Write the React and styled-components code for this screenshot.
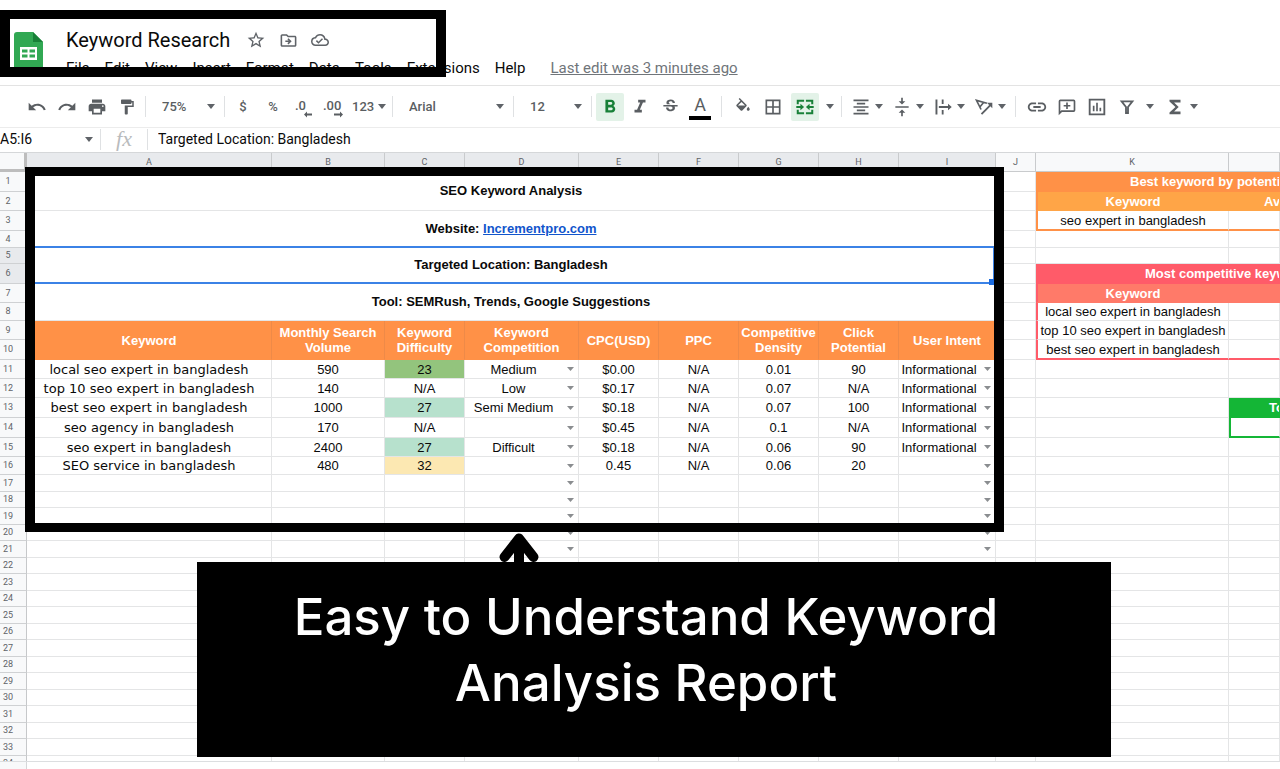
import React from "react";
import styled, { createGlobalStyle, css } from "styled-components";
import {
  MdUndo,
  MdRedo,
  MdPrint,
  MdFormatPaint,
  MdFormatBold,
  MdFormatItalic,
  MdStrikethroughS,
  MdBorderAll,
  MdFormatAlignCenter,
  MdVerticalAlignCenter,
  MdInsertLink,
  MdFunctions,
  MdStarBorder,
  MdOutlineDriveFileMove,
  MdOutlineCloudDone,
} from "react-icons/md";

const GlobalStyle = createGlobalStyle`
  *, *::before, *::after { box-sizing: border-box; }
  body { margin: 0; background: #fff; color: #0a0a0a; font-family: Roboto, "Liberation Sans", sans-serif; }
  button, input, select { font: inherit; color: inherit; border: 0; padding: 0; margin: 0; background: none; border-radius: 0; outline: none; }
  svg { display: block; flex: none; }
`;

const orange = "#ff9147";
const amber = "#ffa547";
const red = "#ff5b69";
const coral = "#ff7a69";
const green = "#14b636";
const line = "#e4e5e6";

const Page = styled.div`
  position: relative;
  display: flex;
  flex-direction: column;
  height: 100vh;
  overflow: hidden;
`;

/* Title area */

const Header = styled.header`
  display: flex;
  flex: none;
  gap: 23px;
  padding: 26px 14px 7px;
  border-bottom: 1px solid #e3e3e3;
`;

const LogoSlot = styled.div`
  padding-top: 6px;
  height: 46px;
`;

const HeaderText = styled.div`
  display: flex;
  flex-direction: column;
  gap: 4px;
`;

const TitleRow = styled.div`
  display: flex;
  align-items: center;
  height: 28px;
`;

const Title = styled.h1`
  margin: 0 10px 0 0;
  font-size: 20px;
  line-height: 28px;
  font-weight: 400;
  white-space: nowrap;
`;

const TitleButton = styled.button`
  display: flex;
  align-items: center;
  justify-content: center;
  width: 32px;
  height: 28px;
  color: #5f6368;
`;

const MenuBar = styled.nav`
  display: flex;
  align-items: center;
  gap: 15px;
  height: 20px;
  font-size: 15px;
  line-height: 20px;
  white-space: nowrap;
`;

const EditLink = styled.a`
  margin-left: 10px;
  color: #70757a;
  text-decoration: underline;
`;

/* Toolbar */

const Toolbar = styled.div`
  display: flex;
  flex: none;
  align-items: center;
  height: 42px;
  padding-left: 22px;
  border-bottom: 1px solid #ececec;
  color: #5a5e62;
  font-size: 13px;
  font-weight: 500;
`;

const Divider = styled.span`
  flex: none;
  width: 1px;
  height: 21px;
  margin: 0 ${(p) => (p.$wide ? 6 : 3)}px;
  background: #dfe1e3;
`;

const ToolButton = styled.button`
  display: flex;
  flex: none;
  align-items: center;
  justify-content: center;
  width: ${(p) => p.$width || 30}px;
  height: 28px;
  ${(p) =>
    p.$active &&
    css`
      width: 28px;
      margin: 0 ${p.$width ? 3 : 1}px;
      border-radius: 2px;
      background: #e3f2e8;
      color: #188038;
    `}
`;

const SplitButton = styled.button`
  display: flex;
  flex: none;
  align-items: center;
  gap: 4px;
  width: 41px;
  height: 28px;
  padding-left: 6px;
`;

const NumberFormat = styled(SplitButton)`
  padding-left: 4px;
`;

const PickerWrap = styled.label`
  display: grid;
  flex: none;
  align-items: center;
  width: ${(p) => p.$width}px;
  height: 28px;
  padding: 0 6px 0 13px;

  & > * {
    grid-area: 1 / 1;
  }
  & > svg {
    justify-self: end;
    pointer-events: none;
  }
`;

const PickerSelect = styled.select`
  width: 100%;
  appearance: none;
`;

const TextColor = styled.span`
  display: flex;
  flex-direction: column;
  align-items: center;
  width: 22px;
  border-bottom: 4px solid #000;
  font-size: 18px;
  line-height: 22px;
  font-weight: 400;
`;

/* Formula bar */

const FormulaBar = styled.div`
  display: flex;
  flex: none;
  align-items: center;
  height: 24px;
  padding-bottom: 2px;
  font-size: 14px;
`;

const NameBox = styled.label`
  display: flex;
  align-items: center;
  width: 97px;
  padding-right: 4px;
`;

const NameInput = styled.input`
  width: 88px;
  min-width: 0;
  flex: 1;
`;

const Fx = styled.span`
  width: 40px;
  color: #b9bbbd;
  font-family: "Liberation Serif", serif;
  font-size: 22px;
  line-height: 22px;
  font-style: italic;
  text-align: center;
`;

const FormulaInput = styled.input`
  flex: 1;
  padding-left: 7px;
`;

/* Sheet */

const Sheet = styled.main`
  flex: 1;
  min-height: 0;
  overflow: hidden;
  border-top: 1px solid #d5d7d9;
`;

const Grid = styled.table`
  width: 100%;
  table-layout: fixed;
  border-collapse: separate;
  border-spacing: 0;
  font-family: "Liberation Sans", Arial, sans-serif;
  font-size: 13px;
  line-height: 15px;
`;

const Col = styled.col`
  width: ${(p) => (p.$width ? `${p.$width}px` : "auto")};
`;

const Corner = styled.td`
  height: 19px;
  padding: 0;
  border-right: 3px solid #bdbdbd;
  border-bottom: 3px solid #bdbdbd;
  background: #f8f9fa;
`;

const ColumnHead = styled.th`
  padding: 0;
  height: 19px;
  border-right: 1px solid #c9cbcd;
  border-bottom: 1px solid #c9cbcd;
  background: ${(p) => (p.$selected ? "#e8eaed" : "#f8f9fa")};
  color: #5f6368;
  font-family: Roboto, sans-serif;
  font-size: 9px;
  font-weight: 400;
`;

const Row = styled.tr`
  height: ${(p) => p.$height}px;
`;

const RowHead = styled.th`
  padding: 0 10px 0 0;
  border-right: 1px solid #c6c8ca;
  border-bottom: 1px solid #cfd1d3;
  background: ${(p) => (p.$selected ? "#e8eaed" : "#f8f9fa")};
  color: #5f6368;
  font-family: Roboto, sans-serif;
  font-size: 9px;
  font-weight: 400;
`;

const Cell = styled.td`
  position: relative;
  padding: 0;
  overflow: hidden;
  border-right: 1px solid ${line};
  border-bottom: 1px solid ${line};
  background: ${(p) => p.$fill || "#fff"};
  text-align: center;
  white-space: nowrap;
`;

const KeywordCell = styled(Cell)`
  font-family: "DejaVu Sans", Verdana, sans-serif;
`;

const BannerCell = styled(Cell)`
  padding-bottom: 2px;
  overflow: visible;
  font-weight: 700;

  a {
    color: #1155cc;
  }
`;

const Selection = styled.span`
  position: absolute;
  z-index: 1;
  inset: -2px 0 -1px;
  border: 2px solid #3b82e6;

  &::after {
    content: "";
    position: absolute;
    right: -2px;
    bottom: -3px;
    width: 6px;
    height: 6px;
    background: #1a6be0;
  }
`;

const HeadCell = styled.th`
  padding: 0;
  border-right: 1px solid ${(p) => (p.$fill ? "transparent" : "#ee8a48")};
  border-bottom: 1px solid transparent;
  background: ${(p) => p.$fill || orange};
  color: #fff;
  font-weight: 700;
  overflow: hidden;
  white-space: ${(p) => (p.$fill ? "nowrap" : "normal")};
  ${(p) =>
    p.$indent &&
    css`
      padding-left: ${p.$indent}px;
      text-align: left;
    `}
`;

const BoxCell = styled(Cell)`
  ${(p) => p.$edge && `border-left: 2px solid ${p.$edge};`}
  ${(p) => p.$close && `border-bottom: 2px solid ${p.$close};`}
`;

const BoxHead = styled(HeadCell)`
  border-left: ${(p) => (p.$edge ? `2px solid ${p.$edge}` : "0")};
`;

const CellPicker = styled.label`
  display: grid;
  align-items: center;

  & > * {
    grid-area: 1 / 1;
  }
  & > svg {
    justify-self: end;
    margin-right: 4px;
    pointer-events: none;
  }
`;

const CellSelect = styled.select`
  width: 100%;
  height: 15px;
  padding-right: 16px;
  appearance: none;
  text-align: center;
  text-align-last: center;
`;

const Footer = styled.footer`
  flex: none;
  height: 8px;
  border-top: 1px solid #dcdee0;
`;

const FooterCorner = styled.div`
  width: 27px;
  height: 100%;
  border-right: 1px solid #d5d7d9;
  background: #f8f9fa;
`;

/* Annotations drawn over the page */

const TitleFrame = styled.div`
  position: absolute;
  top: 10px;
  left: 0;
  width: 446px;
  height: 67px;
  border: 10px solid #000;
  border-top-width: 9px;
  pointer-events: none;
`;

const TableFrame = styled.div`
  position: absolute;
  z-index: 2;
  top: 167px;
  left: 25px;
  width: 979px;
  height: 365px;
  border: solid #000;
  border-width: 9px 10px;
  pointer-events: none;
`;

const Pointer = styled.svg`
  position: absolute;
  z-index: 2;
  top: 532px;
  left: 499px;
`;

const Caption = styled.aside`
  position: absolute;
  z-index: 3;
  top: 562px;
  right: 169px;
  left: 197px;
  padding: 22px 16px 41px 0;
  background: #000;
  color: #fff;
  font-family: Inter, sans-serif;
  font-size: 51px;
  line-height: 66px;
  font-weight: 500;
  text-align: center;
`;

const Caret = ({ small }) => (
  <svg width={small ? 7 : 8} height={small ? 4 : 5} viewBox="0 0 8 4" preserveAspectRatio="none" aria-hidden="true">
    <path d="M0 0h8L4 4z" fill={small ? "#8a8d90" : "#5f6368"} />
  </svg>
);

const SheetsLogo = () => (
  <svg width="29" height="40" viewBox="0 0 29 40" aria-hidden="true">
    <path d="M3 0h16l10 10v27a3 3 0 0 1-3 3H3a3 3 0 0 1-3-3V3a3 3 0 0 1 3-3z" fill="#31a853" />
    <path d="M19 0l10 10H19z" fill="#188038" />
    <path d="M6 15h17v13H6z" fill="#fff" />
    <path d="M8 17.500h5.500v3H8zM15.500 17.500H21v3h-5.500zM8 22.500h5.500v3H8zM15.500 22.500H21v3h-5.500z" fill="#31a853" />
  </svg>
);

const Glyph = ({ d, size = 20, children }) => (
  <svg width={size} height={size} viewBox="0 0 24 24" fill="currentColor" aria-hidden="true">
    {d && <path d={d} />}
    {children}
  </svg>
);

const FillIcon = () => (
  <Glyph size={18} d="M16.560 8.940L7.620 0 6.210 1.410l2.380 2.380-5.150 5.150c-.59.59-.59 1.540 0 2.120l5.500 5.500c.29.29.68.44 1.060.44s.77-.15 1.060-.44l5.500-5.500c.59-.58.59-1.530 0-2.120zM5.210 10L10 5.210 14.790 10H5.210zM19 11.500s-2 2.170-2 3.500c0 1.100.9 2 2 2s2-.9 2-2c0-1.330-2-3.500-2-3.500z" />
);

const MergeIcon = () => (
  <Glyph size={22} d="M3 4h8v2.200H5.200V9H3zM13 4h8v5h-2.200V6.200H13zM3 15h2.200v2.800H11V20H3zM18.800 15H21v5h-8v-2.200h5.800zM2.500 11H7V8.500l4 3.500-4 3.500V13H2.500zM21.500 11H17V8.500L13 12l4 3.500V13h4.500z" />
);

const WrapIcon = () => (
  <Glyph d="M3 3h2.300v18H3zM10.500 3h2.200v5.500h-2.200zM10.500 15.500h2.200V21h-2.200zM7 10.900h11V8l4.500 4-4.500 4v-2.900H7z" />
);

const RotateIcon = () => (
  <Glyph>
    <path d="M8.500 15L3 4l12.500 3.500M3 4l4 8M7 12l4.500-5.500" fill="none" stroke="currentColor" strokeWidth="2" />
    <path d="M9 20.500L20 9.500" fill="none" stroke="currentColor" strokeWidth="2.200" />
    <path d="M15.500 7H22v6.500z" />
  </Glyph>
);

const CommentIcon = () => (
  <Glyph d="M20 3H4a2 2 0 0 0-2 2v17l4-4h14a2 2 0 0 0 2-2V5a2 2 0 0 0-2-2zm0 13H5.200L4 17.200V5h16zM11 6.500h2v3h3v2h-3v3h-2v-3H8v-2h3z" />
);

const ChartIcon = () => (
  <Glyph>
    <path d="M3.200 3.200h17.600v17.600H3.200z" fill="none" stroke="currentColor" strokeWidth="2.200" />
    <path d="M7 10.500h2V17H7zM11 7h2v10h-2zM15 13h2v4h-2z" />
  </Glyph>
);

const FilterIcon = () => (
  <Glyph>
    <path d="M5.500 5.200h13L13.200 12v7.200h-2.400V12z" fill="none" stroke="currentColor" strokeWidth="2.200" />
  </Glyph>
);

const DecimalIcon = ({ text, more }) => (
  <svg width="22" height="22" viewBox="0 0 22 22" fill="currentColor" aria-hidden="true">
    <text x={more ? 1 : 3} y="14" fontSize="13" fontWeight="500">{text}</text>
    <path d={more ? "M12 17.500h6v-2l3 3-3 3v-2h-6z" : "M20 17.500h-5v-2l-3 3 3 3v-2h5z"} />
  </svg>
);

const Picker = ({ label, value, width }) => (
  <PickerWrap $width={width}>
    <PickerSelect aria-label={label} defaultValue={value}>
      <option>{value}</option>
    </PickerSelect>
    <Caret />
  </PickerWrap>
);

const DropCell = ({ label, value, options }) => (
  <Cell>
    <CellPicker>
      <CellSelect aria-label={label} defaultValue={value}>
        <option value="" />
        {options.map((o) => (
          <option key={o}>{o}</option>
        ))}
      </CellSelect>
      <Caret small />
    </CellPicker>
  </Cell>
);

const menus = ["File", "Edit", "View", "Insert", "Format", "Data", "Tools", "Extensions", "Help"];
const letters = ["A", "B", "C", "D", "E", "F", "G", "H", "I", "J", "K", "L"];
const columnWidths = [27, 245, 113, 80, 114, 80, 80, 80, 80, 97, 40, 193, 0];
const rowHeights = [20, 19, 20, 17, 16, 20, 19, 18, 19, 20, 19, 19, 20, 20, 19, 18];
const heads = [
  "Keyword",
  "Monthly Search Volume",
  "Keyword Difficulty",
  "Keyword Competition",
  "CPC(USD)",
  "PPC",
  "Competitive Density",
  "Click Potential",
  "User Intent",
];
const competition = ["Low", "Medium", "Semi Medium", "Difficult"];
const intents = ["Informational"];

const keywords = {
  11: ["local seo expert in bangladesh", "590", "23", "Medium", "$0.00", "N/A", "0.01", "90", "Informational"],
  12: ["top 10 seo expert in bangladesh", "140", "N/A", "Low", "$0.17", "N/A", "0.07", "N/A", "Informational"],
  13: ["best seo expert in bangladesh", "1000", "27", "Semi Medium", "$0.18", "N/A", "0.07", "100", "Informational"],
  14: ["seo agency in bangladesh", "170", "N/A", "", "$0.45", "N/A", "0.1", "N/A", "Informational"],
  15: ["seo expert in bangladesh", "2400", "27", "Difficult", "$0.18", "N/A", "0.06", "90", "Informational"],
  16: ["SEO service in bangladesh", "480", "32", "", "0.45", "N/A", "0.06", "20", ""],
};

const difficultyFill = { 23: "#93c47d", 27: "#b7e1cd", 32: "#fce8b2" };

const banners = {
  1: "SEO Keyword Analysis",
  3: (
    <>
      Website: <a href="#website">Incrementpro.com</a>
    </>
  ),
  5: "Targeted Location: Bangladesh",
  7: "Tool: SEMRush, Trends, Google Suggestions",
};

const MainCells = ({ n }) => {
  if (n < 9) {
    return banners[n] ? (
      <BannerCell colSpan={9} rowSpan={2}>
        {banners[n]}
        {n === 5 && <Selection />}
      </BannerCell>
    ) : null;
  }
  if (n === 9) {
    return heads.map((h) => (
      <HeadCell key={h} rowSpan={2}>
        {h}
      </HeadCell>
    ));
  }
  if (n === 10) return null;
  const data = keywords[n] || [];
  const hasPickers = n < 22;
  return heads.map((h, i) => {
    const value = data[i] || "";
    if (i === 0) return <KeywordCell key={h}>{value}</KeywordCell>;
    if (hasPickers && i === 3) return <DropCell key={h} label={h} value={value} options={competition} />;
    if (hasPickers && i === 8) return <DropCell key={h} label={h} value={value} options={intents} />;
    return (
      <Cell key={h} $fill={i === 2 ? difficultyFill[value] : undefined}>
        {value}
      </Cell>
    );
  });
};

const sideKeywords = {
  8: "local seo expert in bangladesh",
  9: "top 10 seo expert in bangladesh",
  10: "best seo expert in bangladesh",
};

const SideCells = ({ n }) => {
  if (n === 1) return <BoxHead colSpan={2} $fill={orange} $edge={orange} $indent={92}>Best keyword by potential</BoxHead>;
  if (n === 2)
    return (
      <>
        <BoxHead $fill={amber} $edge={orange}>Keyword</BoxHead>
        <BoxHead $fill={amber} $indent={35}>Avg</BoxHead>
      </>
    );
  if (n === 3)
    return (
      <>
        <BoxCell $edge={orange} $close={orange}>seo expert in bangladesh</BoxCell>
        <BoxCell $close={orange} />
      </>
    );
  if (n === 6) return <BoxHead colSpan={2} $fill={red} $edge={red} $indent={107}>Most competitive keyword</BoxHead>;
  if (n === 7)
    return (
      <>
        <BoxHead $fill={coral} $edge={red}>Keyword</BoxHead>
        <BoxHead $fill={coral} />
      </>
    );
  if (sideKeywords[n])
    return (
      <>
        <BoxCell $edge={red} $close={n === 10 && red}>{sideKeywords[n]}</BoxCell>
        <BoxCell $close={n === 10 && red} />
      </>
    );
  return (
    <>
      <Cell />
      {n === 13 && <BoxHead $fill={green} $edge={green} $indent={38}>Total</BoxHead>}
      {n === 14 && <BoxCell $edge={green} $close={green} />}
      {n !== 13 && n !== 14 && <Cell />}
    </>
  );
};

const rowHeight = (n) => rowHeights[n - 1] || (n % 2 ? 17 : 16);

export default function App() {
  return (
    <Page>
      <GlobalStyle />
      <Header>
        <LogoSlot>
          <SheetsLogo />
        </LogoSlot>
        <HeaderText>
          <TitleRow>
            <Title>Keyword Research</Title>
            <TitleButton aria-label="Star"><MdStarBorder size={20} /></TitleButton>
            <TitleButton aria-label="Move"><MdOutlineDriveFileMove size={19} /></TitleButton>
            <TitleButton aria-label="Saved to Drive"><MdOutlineCloudDone size={18} /></TitleButton>
          </TitleRow>
          <MenuBar>
            {menus.map((m) => (
              <button key={m}>{m}</button>
            ))}
            <EditLink href="#history">Last edit was 3 minutes ago</EditLink>
          </MenuBar>
        </HeaderText>
      </Header>

      <Toolbar role="toolbar">
        <ToolButton aria-label="Undo"><MdUndo size={20} /></ToolButton>
        <ToolButton aria-label="Redo"><MdRedo size={20} /></ToolButton>
        <ToolButton aria-label="Print"><MdPrint size={20} /></ToolButton>
        <ToolButton aria-label="Paint format"><MdFormatPaint size={18} /></ToolButton>
        <Divider />
        <Picker label="Zoom" value="75%" width={72} />
        <Divider />
        <ToolButton>$</ToolButton>
        <ToolButton>%</ToolButton>
        <ToolButton aria-label="Decrease decimal places"><DecimalIcon text=".0" /></ToolButton>
        <ToolButton aria-label="Increase decimal places"><DecimalIcon text=".00" more /></ToolButton>
        <NumberFormat>123<Caret /></NumberFormat>
        <Divider />
        <Picker label="Font" value="Arial" width={114} />
        <Divider />
        <Picker label="Font size" value="12" width={71} />
        <Divider />
        <ToolButton $active aria-label="Bold"><MdFormatBold size={22} /></ToolButton>
        <ToolButton aria-label="Italic"><MdFormatItalic size={22} /></ToolButton>
        <ToolButton aria-label="Strikethrough"><MdStrikethroughS size={19} /></ToolButton>
        <ToolButton aria-label="Text color"><TextColor>A</TextColor></ToolButton>
        <Divider $wide />
        <ToolButton aria-label="Fill color"><FillIcon /></ToolButton>
        <ToolButton aria-label="Borders"><MdBorderAll size={20} /></ToolButton>
        <ToolButton $active $width={32} aria-label="Merge cells"><MergeIcon /></ToolButton>
        <ToolButton $width={16} aria-label="Merge type"><Caret /></ToolButton>
        <Divider />
        <SplitButton aria-label="Horizontal align"><MdFormatAlignCenter size={20} /><Caret /></SplitButton>
        <SplitButton aria-label="Vertical align"><MdVerticalAlignCenter size={20} /><Caret /></SplitButton>
        <SplitButton aria-label="Text wrapping"><WrapIcon /><Caret /></SplitButton>
        <SplitButton aria-label="Text rotation"><RotateIcon /><Caret /></SplitButton>
        <Divider $wide />
        <ToolButton aria-label="Insert link"><MdInsertLink size={22} /></ToolButton>
        <ToolButton aria-label="Insert comment"><CommentIcon /></ToolButton>
        <ToolButton aria-label="Insert chart"><ChartIcon /></ToolButton>
        <ToolButton aria-label="Filter"><FilterIcon /></ToolButton>
        <ToolButton $width={16} aria-label="Filter views"><Caret /></ToolButton>
        <SplitButton aria-label="Functions"><MdFunctions size={22} /><Caret /></SplitButton>
      </Toolbar>

      <FormulaBar>
        <NameBox>
          <NameInput aria-label="Name box" defaultValue="A5:I6" />
          <Caret />
        </NameBox>
        <Divider />
        <Fx>fx</Fx>
        <Divider />
        <FormulaInput aria-label="Formula" defaultValue="Targeted Location: Bangladesh" />
      </FormulaBar>

      <Sheet>
        <Grid>
          <colgroup>
            {columnWidths.map((w, i) => (
              <Col key={i} $width={w} />
            ))}
          </colgroup>
          <thead>
            <tr>
              <Corner />
              {letters.map((l, i) => (
                <ColumnHead key={l} scope="col" $selected={i < 9}>
                  {i < 11 ? l : ""}
                </ColumnHead>
              ))}
            </tr>
          </thead>
          <tbody>
            {Array.from({ length: 34 }, (_, i) => i + 1).map((n) => (
              <Row key={n} $height={rowHeight(n)}>
                <RowHead scope="row" $selected={n === 5 || n === 6}>{n}</RowHead>
                <MainCells n={n} />
                <Cell />
                <SideCells n={n} />
              </Row>
            ))}
          </tbody>
        </Grid>
      </Sheet>
      <Footer>
        <FooterCorner />
      </Footer>

      <TitleFrame />
      <TableFrame />
      <Pointer width="40" height="32" viewBox="0 0 40 32" fill="none" stroke="#000" strokeWidth="10" aria-hidden="true">
        <path d="M5.500 25L20 6.500L34.500 25" strokeLinecap="round" strokeLinejoin="round" />
        <path d="M20 8v24" />
      </Pointer>
      <Caption>
        Easy to Understand Keyword
        <br />
        Analysis Report
      </Caption>
    </Page>
  );
}
